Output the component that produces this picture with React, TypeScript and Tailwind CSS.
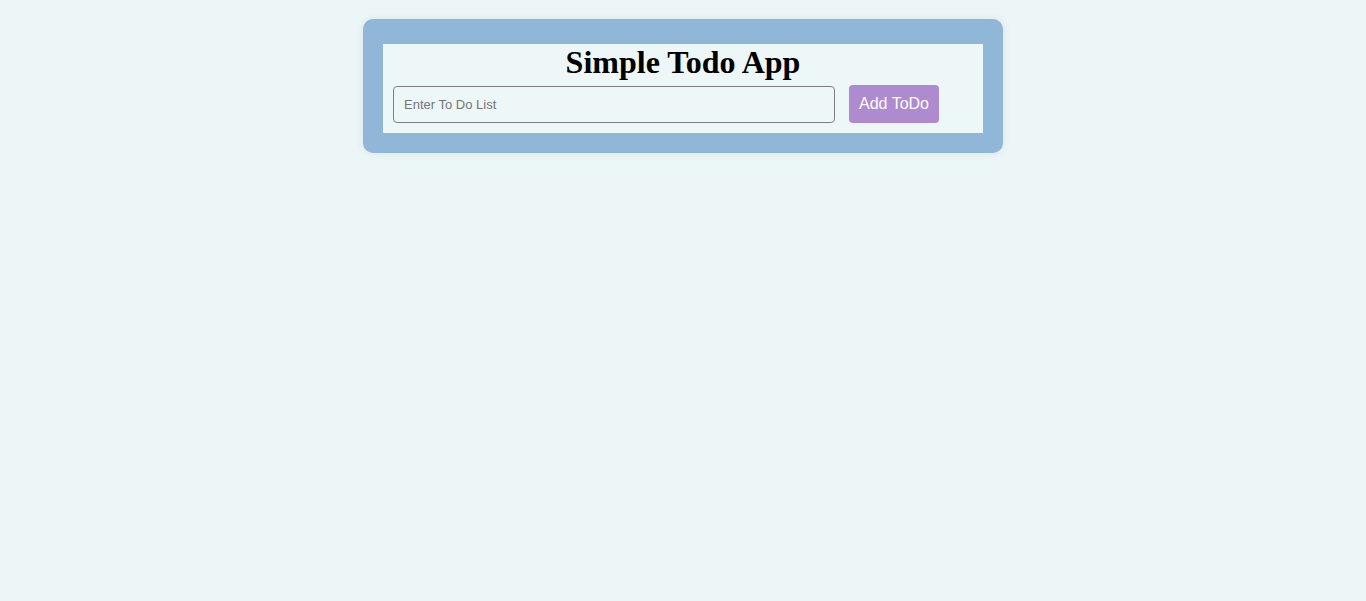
export default function App() {
  return (
    <div className="min-h-screen w-full bg-[#edf6f6] pt-[19px]">
      <div className="mx-auto w-[640px] rounded-[10px] bg-[#90b6d8] px-5 pt-[25px] pb-5 shadow-[0_0_8px_rgba(0,0,0,0.08)]">
        {/* todo box */}
        <div className="bg-[#eef7f7] pb-[10px]">
          <h1 className="text-center font-['Liberation_Serif',serif] text-[32px] font-bold leading-[37px] text-black">
            Simple Todo App
          </h1>
          <div className="mt-[4px] flex items-center pl-[10px]">
            <input
              type="text"
              placeholder="Enter To Do List"
              className="h-[37px] w-[442px] rounded-[4px] border border-[#808080] bg-[#eef7f7] px-[10px] font-['Liberation_Sans',Arial,sans-serif] text-[13px] text-black placeholder:text-[#757575] outline-none"
            />
            <button className="ml-[14px] h-[38px] w-[90px] rounded-[4px] bg-[#ae8acf] font-['Liberation_Sans',Arial,sans-serif] text-[16px] text-white">
              Add ToDo
            </button>
          </div>
        </div>
      </div>
    </div>
  );
}
